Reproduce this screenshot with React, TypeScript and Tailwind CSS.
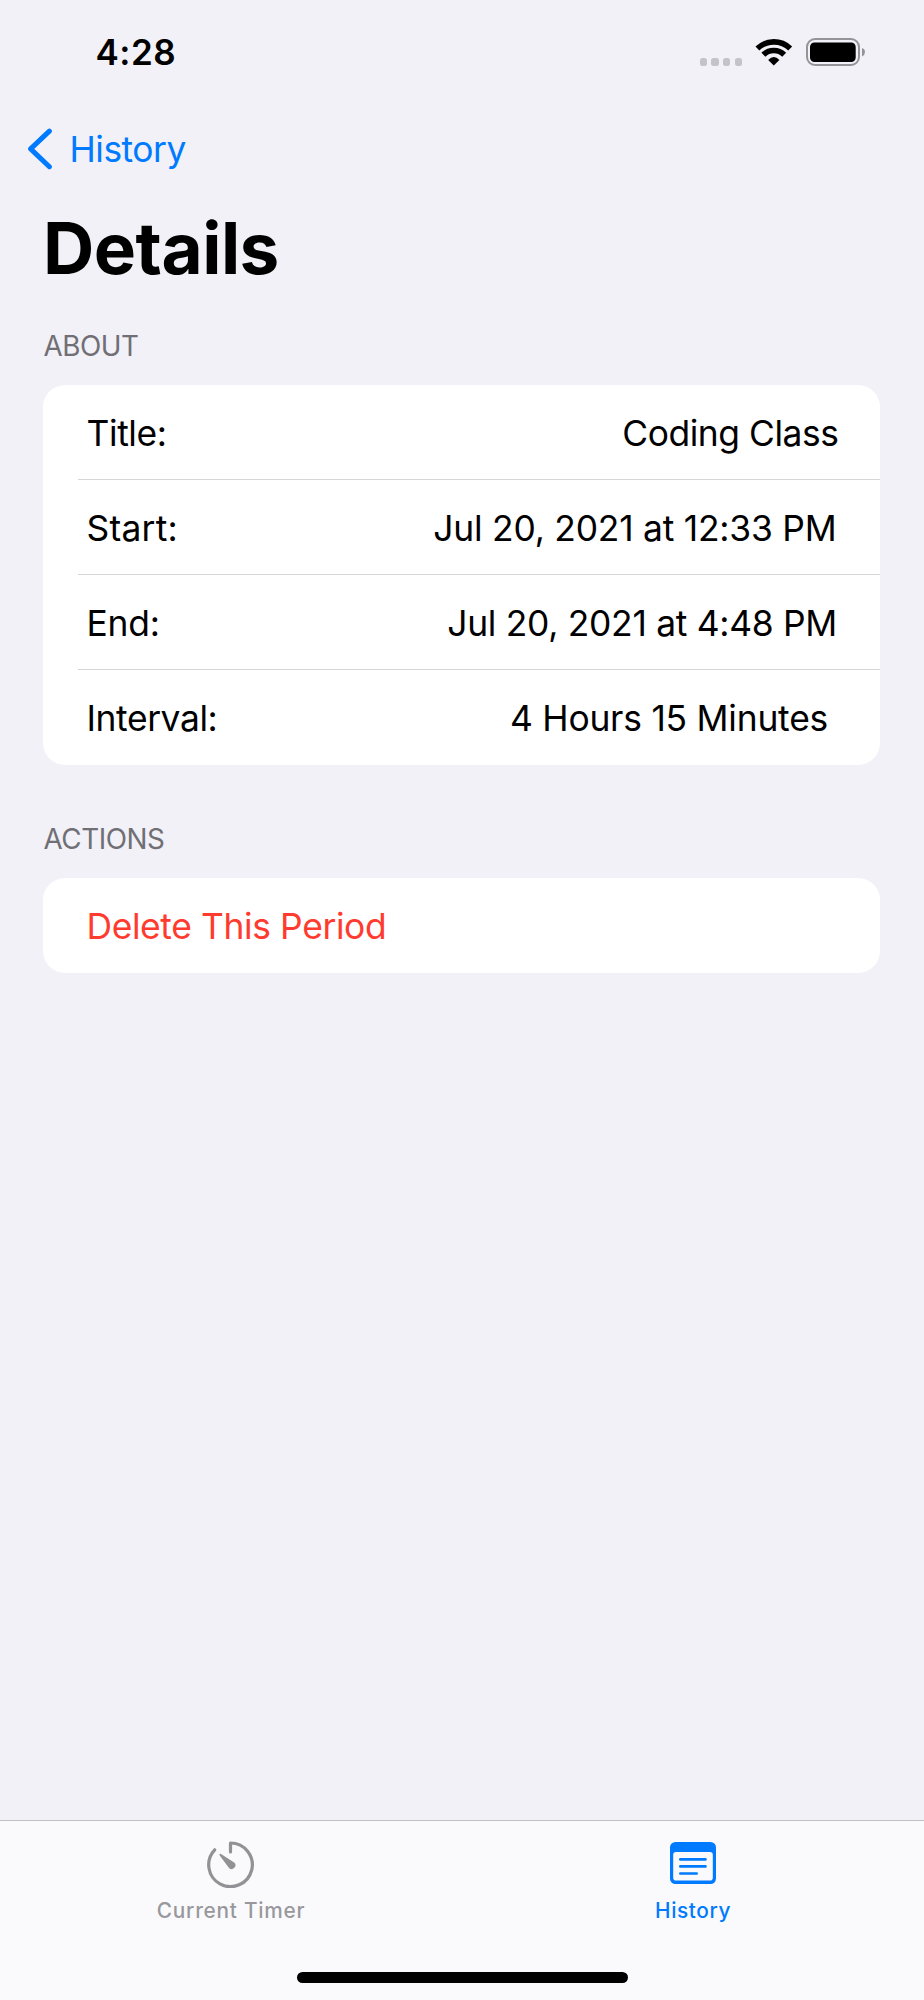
import type { ReactNode } from 'react';

function StatusBar() {
  return (
    <div className="flex h-[105px] shrink-0 items-center justify-between pr-[58px] pl-[95.5px]">
      <span className="text-[35px] leading-none font-semibold tracking-[0.47px]">4:28</span>
      <div className="flex items-center pb-[2px]">
        <div className="mt-5 mr-[13px] flex gap-[4.4px]">
          <span className="h-2 w-[7.3px] rounded-[2.5px] bg-[#c4c4c8]" />
          <span className="h-2 w-[7.3px] rounded-[2.5px] bg-[#c4c4c8]" />
          <span className="h-2 w-[7.3px] rounded-[2.5px] bg-[#c4c4c8]" />
          <span className="h-2 w-[7.3px] rounded-[2.5px] bg-[#c4c4c8]" />
        </div>
        <svg className="h-7 w-[38px]" viewBox="0 0 38 28" fill="none" stroke="black" strokeWidth="5.6">
          <path d="M2.4 10.5A23.6 23.6 0 0 1 35.2 10.5" />
          <path d="M8.4 16.7A15 15 0 0 1 29.2 16.7" />
          <path d="M18.8 27.5L13.2 21.9Q18.8 16.2 24.4 21.9Z" fill="black" stroke="none" />
        </svg>
        <svg className="ml-[13px] h-7 w-[60px]" viewBox="0 0 60 28">
          <rect x="1" y="1" width="52" height="26" rx="8" fill="none" stroke="#939398" strokeWidth="2" />
          <rect x="4" y="4.5" width="45.7" height="19.5" rx="4.5" fill="black" />
          <path d="M56 10Q59 11.2 59 14T56 18.5Z" fill="#939398" />
        </svg>
      </div>
    </div>
  );
}

function SectionHeader({ className, children }: { className: string; children: ReactNode }) {
  return (
    <h2 className={`flex items-center pl-[43.5px] text-[27.8px] leading-none tracking-[-0.45px] text-[#6f6f75] ${className}`}>
      {children}
    </h2>
  );
}

const rows = [
  { label: 'Title:', value: 'Coding Class', labelClass: 'tracking-[-0.38px]', valueClass: 'pr-[41.5px] tracking-[-0.44px]' },
  { label: 'Start:', value: 'Jul 20, 2021 at 12:33 PM', labelClass: 'tracking-[0.24px]', valueClass: 'pr-[43.5px] tracking-[-0.22px]' },
  { label: 'End:', value: 'Jul 20, 2021 at 4:48 PM', labelClass: 'tracking-[-0.18px]', valueClass: 'pr-[43px] tracking-[-0.29px]' },
  { label: 'Interval:', value: '4 Hours 15 Minutes', labelClass: 'tracking-[-0.41px]', valueClass: 'pr-[52px] tracking-[-0.22px]' },
];

function TimerIcon() {
  return (
    <svg className="h-12 w-12" viewBox="0 0 48 48" fill="none" stroke="#929296" strokeWidth="3.2" strokeLinecap="round" strokeLinejoin="round">
      <path d="M23.5 12V3A21.8 21.8 0 1 1 7.7 9.8" />
      <path d="M12.6 14.1Q13.2 13.5 14 14.1L27.2 22.5A3.7 3.7 0 1 1 22 27.9L12.7 15.4Q12.2 14.6 12.6 14.1Z" fill="#929296" stroke="none" />
    </svg>
  );
}

function HistoryIcon() {
  return (
    <svg className="h-12 w-12" viewBox="0 0 48 48">
      <rect x="1" y="2" width="46" height="42" rx="5.5" fill="#007aff" />
      <rect x="4.2" y="12" width="39.6" height="28.6" rx="2.8" fill="#fafafc" />
      <path d="M11.3 19.4H36.5M11.3 26.4H36.5M11.3 33.5H27.7" stroke="#007aff" strokeWidth="2.6" strokeLinecap="round" />
    </svg>
  );
}

export default function App() {
  return (
    <div className="flex h-[2000px] w-[924px] flex-col overflow-hidden bg-[#f2f1f7] font-['Inter','Liberation_Sans',sans-serif] text-[35.4px] leading-none whitespace-nowrap text-black">
      <StatusBar />
      <nav className="flex h-[88px] shrink-0 items-center pl-[27px] text-[#007aff]">
        <svg className="h-[42px] w-[26px]" viewBox="0 0 26 42" fill="none" stroke="currentColor" strokeWidth="5" strokeLinecap="round" strokeLinejoin="round">
          <path d="M22.4 3.1L3.6 20.9L22.4 38.7" />
        </svg>
        <span className="ml-[16.5px] pt-[2px] tracking-[-0.48px]">History</span>
      </nav>
      <h1 className="flex h-[111px] shrink-0 items-center pl-[43px] text-[71px] leading-none font-bold tracking-[-0.5px]">
        Details
      </h1>

      <SectionHeader className="h-[81px] pt-[5px]">ABOUT</SectionHeader>
      <section className="mr-11 ml-[43px] overflow-hidden rounded-[22px] bg-white">
        {rows.map((row, i) => (
          <div key={row.label} className="pl-[35px]">
            <div
              className={`flex h-[95px] items-center justify-between pl-[8.5px] ${
                i < rows.length - 1 ? 'border-b border-[#d6d6d8] pt-[3px]' : 'pt-[2px]'
              }`}
            >
              <span className={row.labelClass}>{row.label}</span>
              <span className={row.valueClass}>{row.value}</span>
            </div>
          </div>
        ))}
      </section>

      <SectionHeader className="h-[113px] pt-[37px]">ACTIONS</SectionHeader>
      <button className="mr-11 ml-[43px] flex h-[95px] items-center rounded-[22px] bg-white pt-[2px] pl-[43.5px] tracking-[-0.38px] text-[#ff3b30]">
        Delete This Period
      </button>

      <footer className="mt-auto flex h-[180px] flex-col border-t border-[#c1c1c5] bg-[#fafafc]">
        <div className="grid grid-cols-2 text-[20.8px] leading-none font-medium">
          <div className="flex flex-col items-center pt-[19px] text-[#98989c]">
            <TimerIcon />
            <span className="mt-[13px] tracking-[0.75px]">Current Timer</span>
          </div>
          <div className="flex flex-col items-center pt-[19px] text-[#007aff]">
            <HistoryIcon />
            <span className="mt-[13px] tracking-[0.6px]">History</span>
          </div>
        </div>
        <div className="mx-auto mt-auto mb-[17px] h-[11px] w-[331px] rounded-full bg-black" />
      </footer>
    </div>
  );
}
